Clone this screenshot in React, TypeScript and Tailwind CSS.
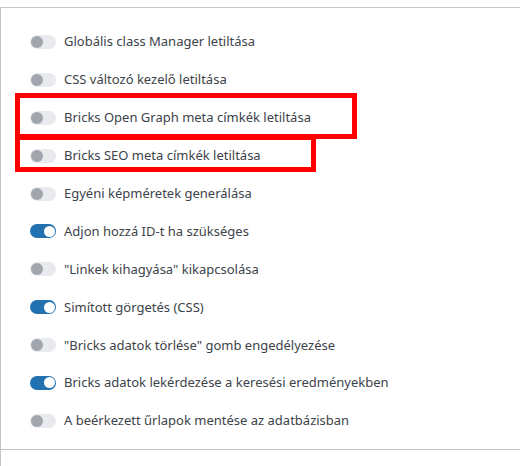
import React from "react";

type Setting = { label: string; on: boolean };

const settings: Setting[] = [
  { label: "Globális class Manager letiltása", on: false },
  { label: "CSS változó kezelő letiltása", on: false },
  { label: "Bricks Open Graph meta címkék letiltása", on: false },
  { label: "Bricks SEO meta címkék letiltása", on: false },
  { label: "Egyéni képméretek generálása", on: false },
  { label: "Adjon hozzá ID-t ha szükséges", on: true },
  { label: "\"Linkek kihagyása\" kikapcsolása", on: false },
  { label: "Simított görgetés (CSS)", on: true },
  { label: "\"Bricks adatok törlése\" gomb engedélyezése", on: false },
  { label: "Bricks adatok lekérdezése a keresési eredményekben", on: true },
  { label: "A beérkezett űrlapok mentése az adatbázisban", on: false },
];

function Toggle({ on }: { on: boolean }) {
  return (
    <span
      className={`relative flex h-[14px] w-[26px] shrink-0 items-center rounded-full ${
        on ? "justify-end bg-[#2271b1] pr-[1px]" : "justify-start bg-[#e9eaee] pl-[1px]"
      }`}
    >
      <span
        className={`block rounded-full ${
          on ? "h-[11px] w-[11px] bg-white" : "h-[12px] w-[12px] bg-[#a1a6ae]"
        }`}
      />
    </span>
  );
}

export default function App() {
  return (
    <div className="relative h-[466px] w-[520px] bg-white pt-[7px]" style={{ fontFamily: "'Noto Sans', sans-serif" }}>
      <div className="h-[459px] border-l border-[#c3c4c7]">
        {/* Settings list */}
        <section className="h-[443px] border-y border-[#c3c4c7] pl-[29px] pt-[15px]">
          {settings.map((s) => (
            <label key={s.label} className="flex h-[37.9px] items-center gap-[8px]">
              <Toggle on={s.on} />
              <span className="text-[13px] leading-none text-[#3c434a]">{s.label}</span>
            </label>
          ))}
        </section>
      </div>

      {/* Annotation boxes */}
      <div className="absolute left-[15px] top-[93px] h-[46px] w-[342px] border-[5px] border-[#ff0000]" />
      <div className="absolute left-[15px] top-[135px] h-[37px] w-[301px] border-[5px] border-[#ff0000]" />
    </div>
  );
}
